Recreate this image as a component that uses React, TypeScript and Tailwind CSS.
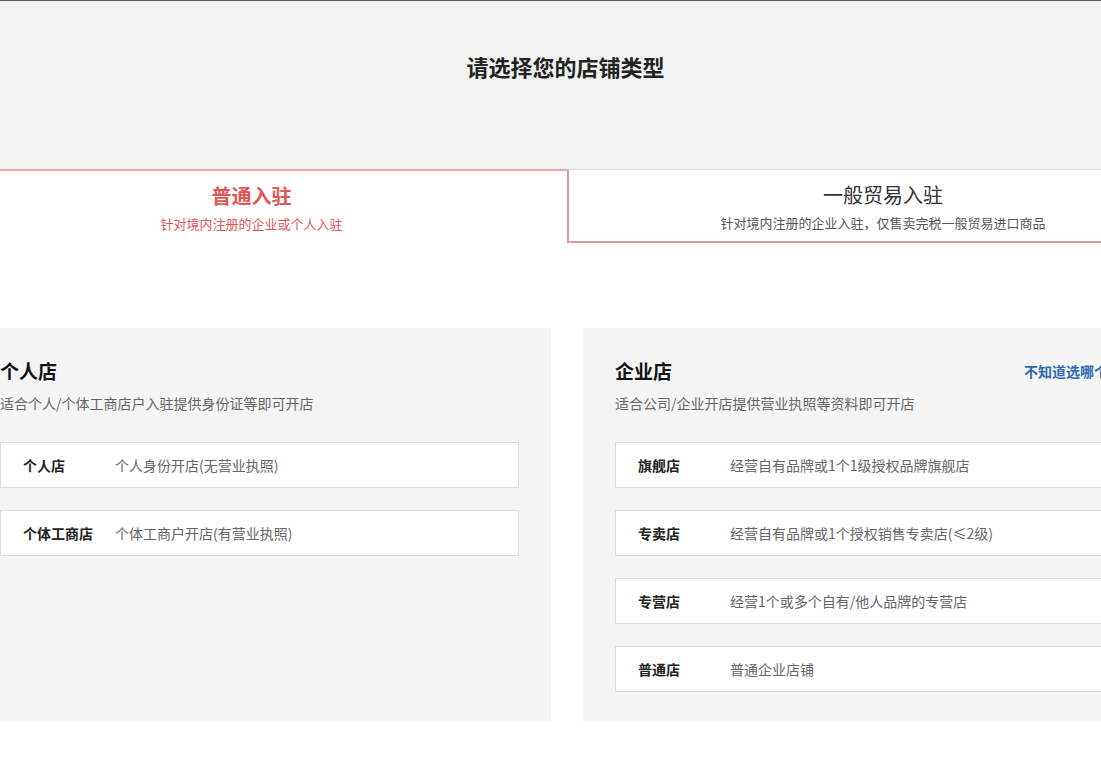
const font = { fontFamily: '"Microsoft YaHei", "Noto Sans CJK SC", sans-serif' }

type Row = { label: string; desc: string }

const personal: Row[] = [
  { label: '个人店', desc: '个人身份开店(无营业执照)' },
  { label: '个体工商店', desc: '个体工商户开店(有营业执照)' },
]

const company: Row[] = [
  { label: '旗舰店', desc: '经营自有品牌或1个1级授权品牌旗舰店' },
  { label: '专卖店', desc: '经营自有品牌或1个授权销售专卖店(≤2级)' },
  { label: '专营店', desc: '经营1个或多个自有/他人品牌的专营店' },
  { label: '普通店', desc: '普通企业店铺' },
]

function Panel({ title, sub, rows, help }: { title: string; sub: string; rows: Row[]; help?: boolean }) {
  return (
    <div className="w-[583px] shrink-0 bg-[#f5f5f5] px-[32px] pt-[30px] pb-[26px] h-[393px]">
      <div className="flex items-center h-[26px]">
        <div className="text-[19px] font-bold text-[#111] whitespace-nowrap">{title}</div>
        {help && <div className="text-[14px] font-bold text-[#2a6bb0] whitespace-nowrap ml-[352px]">不知道选哪个类型？</div>}
      </div>
      <div className="text-[14px] text-[#666] mt-[9px] whitespace-nowrap">{sub}</div>
      <div className="mt-[28px] flex flex-col gap-[22px]">
        {rows.map(r => (
          <div key={r.label} className="h-[46px] bg-white border border-[#dcdcdc] flex items-center px-[22px] text-[14px] whitespace-nowrap">
            <span className="w-[92px] font-bold text-[#222]">{r.label}</span>
            <span className="text-[#666]">{r.desc}</span>
          </div>
        ))}
      </div>
    </div>
  )
}

export default function App() {
  return (
    <div style={font} className="w-[1101px] h-[765px] overflow-hidden bg-white">
      <div className="h-[169px] bg-[#f2f2f2] border-t border-[#555] flex items-center justify-center pb-[38px] pl-[30px]">
        <h1 className="text-[22px] font-bold text-[#222]">请选择您的店铺类型</h1>
      </div>
      <div className="flex h-[74px]">
        <div className="w-[567px] border-t-2 border-[#e8a5a5] flex flex-col items-center pt-[10px] pr-[64px]">
          <div className="text-[20px] font-bold text-[#e05555]">普通入驻</div>
          <div className="text-[13px] text-[#e05555] mt-[3px]">针对境内注册的企业或个人入驻</div>
        </div>
        <div className="flex-1 border-l-2 border-b-2 border-[#d99a9a] border-t border-t-[#dcdcdc] flex flex-col items-center pt-[10px] pl-[96px]">
          <div className="text-[20px] text-[#333]">一般贸易入驻</div>
          <div className="text-[13px] text-[#555] mt-[3px] whitespace-nowrap">针对境内注册的企业入驻，仅售卖完税一般贸易进口商品</div>
        </div>
      </div>
      <div className="flex gap-[32px] ml-[-32px] mt-[85px]">
        <Panel title="个人店" sub="适合个人/个体工商店户入驻提供身份证等即可开店" rows={personal} />
        <Panel title="企业店" sub="适合公司/企业开店提供营业执照等资料即可开店" rows={company} help />
      </div>
    </div>
  )
}
